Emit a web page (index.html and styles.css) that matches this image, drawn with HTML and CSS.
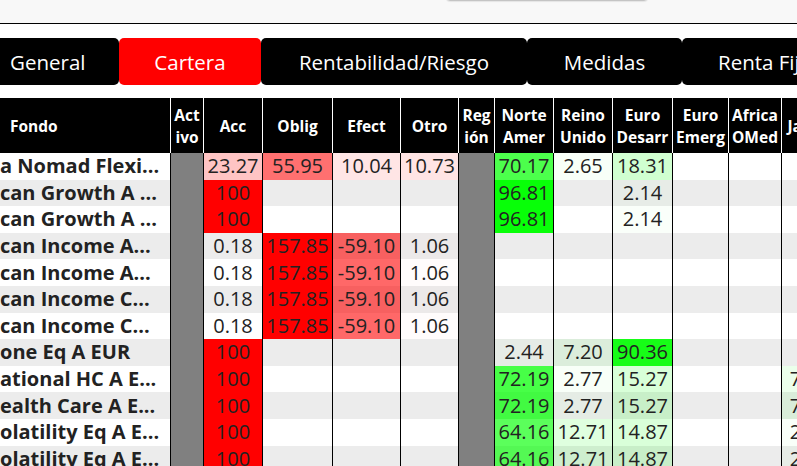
FILE: index.html
```html
<!DOCTYPE html>
<html lang="es">
<head>
<meta charset="utf-8">
<title>Cartera</title>
<link rel="stylesheet" href="styles.css">
</head>
<body>
<div class="topbar"><div class="search"></div></div>
<nav class="tabs">
  <div class="tab t-general">General</div>
  <div class="tab t-cartera active">Cartera</div>
  <div class="tab t-rent">Rentabilidad/Riesgo</div>
  <div class="tab t-medidas">Medidas</div>
  <div class="tab t-renta">Renta Fija</div>
</nav>
<div class="grid-wrap">
<table class="grid">
  <thead>
    <tr>
      <th class="c-fondo">Fondo</th>
      <th class="c-activo">Act<br>ivo</th>
      <th class="c-acc">Acc</th>
      <th class="c-oblig">Oblig</th>
      <th class="c-efect">Efect</th>
      <th class="c-otro">Otro</th>
      <th class="c-region">Reg<br>ión</th>
      <th class="c-norte">Norte<br>Amer</th>
      <th class="c-reino">Reino<br>Unido</th>
      <th class="c-eurod">Euro<br>Desarr</th>
      <th class="c-euroe">Euro<br>Emerg</th>
      <th class="c-africa">Africa<br>OMed</th>
      <th class="c-japon">Japón</th>
    </tr>
  </thead>
  <tbody>
    <tr>
      <td class="fondo">a Nomad Flexi...</td><td class="sep"></td>
      <td style="background:rgba(255,0,0,.2327)">23.27</td>
      <td style="background:rgba(255,0,0,.5595)">55.95</td>
      <td style="background:rgba(255,0,0,.1004)">10.04</td>
      <td style="background:rgba(255,0,0,.1073)">10.73</td>
      <td class="sep"></td>
      <td style="background:rgba(0,255,0,.7017)">70.17</td>
      <td style="background:rgba(0,255,0,.0265)">2.65</td>
      <td style="background:rgba(0,255,0,.1831)">18.31</td>
      <td></td><td></td><td></td>
    </tr>
    <tr>
      <td class="fondo">can Growth A ...</td><td class="sep"></td>
      <td style="background:rgba(255,0,0,1)">100</td>
      <td></td><td></td><td></td>
      <td class="sep"></td>
      <td style="background:rgba(0,255,0,.9681)">96.81</td>
      <td></td>
      <td style="background:rgba(0,255,0,.0214)">2.14</td>
      <td></td><td></td><td></td>
    </tr>
    <tr>
      <td class="fondo">can Growth A ...</td><td class="sep"></td>
      <td style="background:rgba(255,0,0,1)">100</td>
      <td></td><td></td><td></td>
      <td class="sep"></td>
      <td style="background:rgba(0,255,0,.9681)">96.81</td>
      <td></td>
      <td style="background:rgba(0,255,0,.0214)">2.14</td>
      <td></td><td></td><td></td>
    </tr>
    <tr>
      <td class="fondo">can Income A...</td><td class="sep"></td>
      <td>0.18</td>
      <td style="background:rgba(255,0,0,1)">157.85</td>
      <td style="background:rgba(255,0,0,.591)">-59.10</td>
      <td style="background:rgba(255,0,0,.0106)">1.06</td>
      <td class="sep"></td>
      <td></td><td></td><td></td><td></td><td></td><td></td>
    </tr>
    <tr>
      <td class="fondo">can Income A...</td><td class="sep"></td>
      <td>0.18</td>
      <td style="background:rgba(255,0,0,1)">157.85</td>
      <td style="background:rgba(255,0,0,.591)">-59.10</td>
      <td style="background:rgba(255,0,0,.0106)">1.06</td>
      <td class="sep"></td>
      <td></td><td></td><td></td><td></td><td></td><td></td>
    </tr>
    <tr>
      <td class="fondo">can Income C...</td><td class="sep"></td>
      <td>0.18</td>
      <td style="background:rgba(255,0,0,1)">157.85</td>
      <td style="background:rgba(255,0,0,.591)">-59.10</td>
      <td style="background:rgba(255,0,0,.0106)">1.06</td>
      <td class="sep"></td>
      <td></td><td></td><td></td><td></td><td></td><td></td>
    </tr>
    <tr>
      <td class="fondo">can Income C...</td><td class="sep"></td>
      <td>0.18</td>
      <td style="background:rgba(255,0,0,1)">157.85</td>
      <td style="background:rgba(255,0,0,.591)">-59.10</td>
      <td style="background:rgba(255,0,0,.0106)">1.06</td>
      <td class="sep"></td>
      <td></td><td></td><td></td><td></td><td></td><td></td>
    </tr>
    <tr>
      <td class="fondo">one Eq A EUR</td><td class="sep"></td>
      <td style="background:rgba(255,0,0,1)">100</td>
      <td></td><td></td><td></td>
      <td class="sep"></td>
      <td style="background:rgba(0,255,0,.0244)">2.44</td>
      <td style="background:rgba(0,255,0,.072)">7.20</td>
      <td style="background:rgba(0,255,0,.9036)">90.36</td>
      <td></td><td></td><td></td>
    </tr>
    <tr>
      <td class="fondo">ational HC A E...</td><td class="sep"></td>
      <td style="background:rgba(255,0,0,1)">100</td>
      <td></td><td></td><td></td>
      <td class="sep"></td>
      <td style="background:rgba(0,255,0,.7219)">72.19</td>
      <td style="background:rgba(0,255,0,.0277)">2.77</td>
      <td style="background:rgba(0,255,0,.1527)">15.27</td>
      <td></td><td></td>
      <td style="background:rgba(0,255,0,.0777)">7.77</td>
    </tr>
    <tr>
      <td class="fondo">ealth Care A E...</td><td class="sep"></td>
      <td style="background:rgba(255,0,0,1)">100</td>
      <td></td><td></td><td></td>
      <td class="sep"></td>
      <td style="background:rgba(0,255,0,.7219)">72.19</td>
      <td style="background:rgba(0,255,0,.0277)">2.77</td>
      <td style="background:rgba(0,255,0,.1527)">15.27</td>
      <td></td><td></td>
      <td style="background:rgba(0,255,0,.0777)">7.77</td>
    </tr>
    <tr>
      <td class="fondo">olatility Eq A E...</td><td class="sep"></td>
      <td style="background:rgba(255,0,0,1)">100</td>
      <td></td><td></td><td></td>
      <td class="sep"></td>
      <td style="background:rgba(0,255,0,.6416)">64.16</td>
      <td style="background:rgba(0,255,0,.1271)">12.71</td>
      <td style="background:rgba(0,255,0,.1487)">14.87</td>
      <td></td><td></td>
      <td style="background:rgba(0,255,0,.0226)">2.26</td>
    </tr>
    <tr>
      <td class="fondo">olatility Eq A E...</td><td class="sep"></td>
      <td style="background:rgba(255,0,0,1)">100</td>
      <td></td><td></td><td></td>
      <td class="sep"></td>
      <td style="background:rgba(0,255,0,.6416)">64.16</td>
      <td style="background:rgba(0,255,0,.1271)">12.71</td>
      <td style="background:rgba(0,255,0,.1487)">14.87</td>
      <td></td><td></td>
      <td style="background:rgba(0,255,0,.0226)">2.26</td>
    </tr>
  </tbody>
</table>
</div>
</body>
</html>
```
FILE: styles.css
```css
html, body {
  margin: 0;
  padding: 0;
  background: #fff;
}
body {
  width: 797px;
  height: 466px;
  overflow: hidden;
  font-family: "Open Sans", "Noto Sans", "Liberation Sans", sans-serif;
  color: #222;
}
.topbar {
  display: flex;
  height: 23px;
  background: #f8f8f8;
  border-bottom: 1px solid #000;
}
.search {
  margin-top: -29px;
  margin-left: 446px;
  width: 200px;
  height: 28px;
  border: 1px solid #c4c4c4;
  border-radius: 4px;
  background: #fff;
  box-shadow: 0 1px 1px rgba(0,0,0,.08);
}
.tabs {
  display: flex;
  margin: 14px 0 13px -27px;
}
.tab {
  flex: none;
  box-sizing: border-box;
  height: 47px;
  padding: 0;
  display: flex;
  align-items: center;
  justify-content: center;
  background: #000;
  color: #fff;
  border-radius: 5px;
  font-size: 20.5px;
  white-space: nowrap;
}
.t-general { width: 146px; justify-content: flex-start; padding-left: 37px; }
.t-cartera { width: 142px; }
.t-rent { width: 266px; }
.t-medidas { width: 155px; }
.t-renta { width: 150px; justify-content: flex-start; padding-left: 36px; }
.tab.active {
  background: #ff0000;
}
.grid-wrap {
  width: 797px;
  overflow: hidden;
}
.grid {
  border-collapse: separate;
  border-spacing: 0;
  table-layout: fixed;
  width: 838px;
}
.grid th {
  box-sizing: border-box;
  height: 55px;
  padding: 0;
  background: #000;
  color: #fff;
  font-weight: 700;
  font-size: 15.5px;
  line-height: 22px;
  text-align: center;
  vertical-align: middle;
  border-right: 1px solid #fff;
  white-space: nowrap;
  overflow: hidden;
}
.grid th.c-fondo { text-align: left; padding-left: 10px; }
.c-fondo { width: 171px; }
.c-activo { width: 33px; }
.c-acc { width: 59px; }
.c-oblig { width: 70px; }
.c-efect { width: 68px; }
.c-otro { width: 58px; }
.c-region { width: 36px; }
.c-norte { width: 59px; }
.c-reino { width: 59px; }
.c-eurod { width: 60px; }
.c-euroe { width: 56px; }
.c-africa { width: 53px; }
.c-japon { width: 56px; }
.grid td {
  box-sizing: border-box;
  height: 26.6px;
  padding: 0;
  font-size: 20px;
  line-height: 26px;
  text-align: center;
  white-space: nowrap;
  overflow: hidden;
  border-right: 1px solid #000;
  color: #222;
}
.grid tbody tr:nth-child(even) {
  background: #ececec;
}
.grid td.fondo {
  text-align: left;
  font-weight: 700;
  font-size: 20px;
  color: #222;
}
.grid td.sep {
  background: #808080;
}
```
